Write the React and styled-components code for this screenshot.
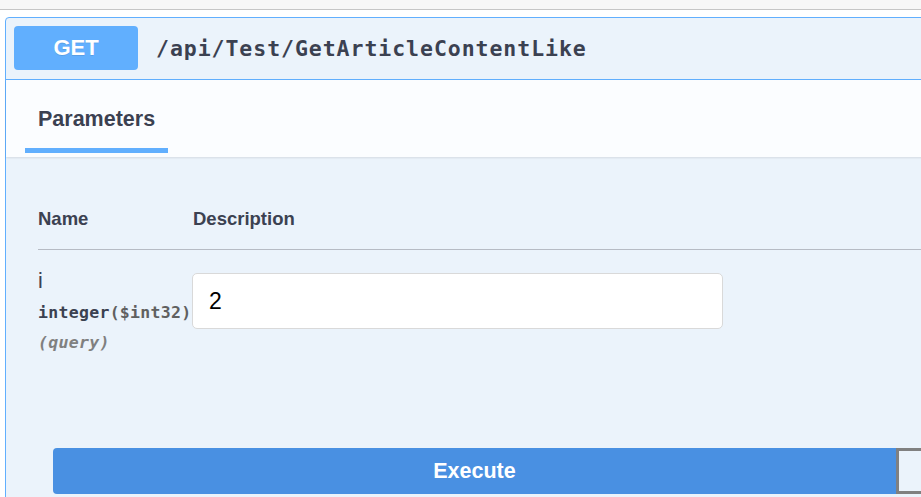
import styled, { createGlobalStyle } from 'styled-components'

const GlobalStyle = createGlobalStyle`
    html, body {
        margin: 0;
        padding: 0;
        background: #fff;
        overflow: hidden;
    }
    body {
        font-family: "Liberation Sans", Arial, sans-serif;
        color: #3b4151;
    }
`

const colors = {
    text: '#3b4151',
    get: '#61affe',
    getBg: '#ebf3fb',
    execute: '#4990e2',
}

const Page = styled.div`
    width: 921px;
    height: 497px;
    overflow: hidden;
`

const TopStrip = styled.div`
    height: 9px;
    background: #f7f7f7;
    border-bottom: 1px solid #c6c6c6;
`

const Opblock = styled.section`
    margin: 7px 0 0 5px;
    width: 1800px;
    height: 600px;
    border: 1px solid ${colors.get};
    border-radius: 4px;
    background: ${colors.getBg};
`

const Summary = styled.div`
    display: flex;
    align-items: center;
    gap: 18px;
    padding: 8px 8px 9px;
    border-bottom: 1px solid ${colors.get};
`

const Method = styled.span`
    width: 124px;
    height: 44px;
    display: flex;
    align-items: center;
    justify-content: center;
    background: ${colors.get};
    border-radius: 4px;
    color: #fff;
    font-size: 22px;
    font-weight: 700;
    text-shadow: 0 1px 0 rgba(0, 0, 0, 0.1);
`

const Path = styled.span`
    font-family: "DejaVu Sans Mono", "Liberation Mono", monospace;
    font-size: 21.5px;
    letter-spacing: 0.95px;
    font-weight: 700;
    color: ${colors.text};
`

const TabHeader = styled.div`
    height: 77px;
    padding-left: 19px;
    display: flex;
    background: #fbfdff;
    box-shadow: 0 1px 2px rgba(0, 0, 0, 0.1);
`

const Tab = styled.div`
    display: flex;
    flex-direction: column;
    padding-top: 25px;
`

const TabLabel = styled.h4`
    margin: 0;
    padding: 0 13px;
    font-size: 21.5px;
    line-height: 28px;
    font-weight: 700;
    color: ${colors.text};
`

const TabLine = styled.div`
    margin-top: 15px;
    height: 5px;
    background: ${colors.get};
`

const Params = styled.div`
    padding: 51px 0 0 32px;
`

const Grid = styled.div`
    display: grid;
    grid-template-columns: 155px 1fr;
`

const HeadCell = styled.div`
    font-size: 18.5px;
    line-height: 22px;
    font-weight: 700;
    padding-bottom: 19px;
    border-bottom: 1px solid #b6bbc4;
`

const NameCell = styled.div`
    padding-top: 18px;
`

const ParamName = styled.div`
    font-size: 21.5px;
    line-height: 26px;
`

const Mono = styled.div`
    margin-top: 8px;
    font-family: "DejaVu Sans Mono", "Liberation Mono", monospace;
    font-size: 16.5px;
    letter-spacing: 0.3px;
    line-height: 22px;
    font-weight: 700;
    font-style: ${p => (p.$italic ? 'italic' : 'normal')};
    color: ${p => p.$color || colors.text};
    white-space: nowrap;
`

const Format = styled.span`
    color: #606060;
`

const DescCell = styled.div`
    padding-top: 23px;
`

const Input = styled.input`
    box-sizing: border-box;
    width: 531px;
    height: 56px;
    margin-left: -1px;
    padding: 0 16px;
    border: 1px solid #d9d9d9;
    border-radius: 5px;
    background: #fff;
    font-family: "Liberation Sans", Arial, sans-serif;
    font-size: 23px;
    color: #000;
    outline: none;
`

const ButtonRow = styled.div`
    display: flex;
    padding: 94px 0 0 47px;
`

const Button = styled.button`
    box-sizing: border-box;
    flex: 0 0 843px;
    height: 46px;
    font-family: "Liberation Sans", Arial, sans-serif;
    font-size: 21.5px;
    font-weight: 700;
    cursor: pointer;
`

const ExecuteButton = styled(Button)`
    border: none;
    border-radius: 4px 0 0 4px;
    background: ${colors.execute};
    color: #fff;
`

const ClearButton = styled(Button)`
    border: 3px solid #808080;
    border-radius: 0 4px 4px 0;
    background: transparent;
    color: ${colors.text};
`

export default function App() {
    return (
        <Page>
            <GlobalStyle />
            <TopStrip />
            <Opblock>
                <Summary>
                    <Method>GET</Method>
                    <Path>/api/Test/GetArticleContentLike</Path>
                </Summary>
                <TabHeader>
                    <Tab>
                        <TabLabel>Parameters</TabLabel>
                        <TabLine />
                    </Tab>
                </TabHeader>
                <Params>
                    <Grid>
                        <HeadCell>Name</HeadCell>
                        <HeadCell>Description</HeadCell>
                        <NameCell>
                            <ParamName>i</ParamName>
                            <Mono>integer<Format>($int32)</Format></Mono>
                            <Mono $italic $color="#808080">(query)</Mono>
                        </NameCell>
                        <DescCell>
                            <Input defaultValue="2" />
                        </DescCell>
                    </Grid>
                </Params>
                <ButtonRow>
                    <ExecuteButton>Execute</ExecuteButton>
                    <ClearButton>Clear</ClearButton>
                </ButtonRow>
            </Opblock>
        </Page>
    )
}
